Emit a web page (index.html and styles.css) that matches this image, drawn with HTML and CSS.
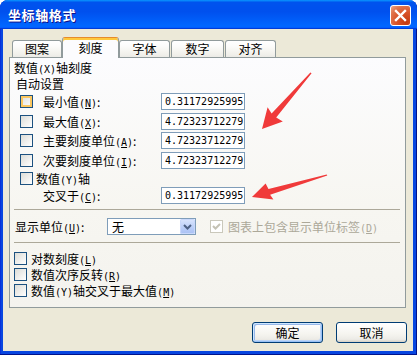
FILE: index.html
```html
<!DOCTYPE html>
<html lang="zh-CN">
<head>
	<meta charset="UTF-8">
	<title>坐标轴格式</title>
	<link rel="stylesheet" href="styles.css">
</head>
<body>
	<div class="win">
		<div class="titlebar">
			<span class="title">坐标轴格式</span>
			<a class="close" href="javascript:;">
				<svg width="19" height="19" viewBox="0 0 19 19"><path d="M5 5L14 14M14 5L5 14" stroke="#fff" stroke-width="2.4" stroke-linecap="square"/></svg>
			</a>
		</div>
		<div class="body">
			<ul class="tabs">
				<li class="t1">图案</li>
				<li class="t2 on">刻度</li>
				<li class="t3">字体</li>
				<li class="t4">数字</li>
				<li class="t5">对齐</li>
			</ul>
			<div class="panel">
				<p class="head">数值<span class="k">(X)</span>轴刻度</p>
				<p class="sub">自动设置</p>
				<div class="row h20"><i class="cb hot"></i><label>最小值<span class="k">(<u>N</u>)</span>:</label><div class="box">0.31172925995</div></div>
				<div class="row h20"><i class="cb"></i><label>最大值<span class="k">(<u>X</u>)</span>:</label><div class="box">4.72323712279</div></div>
				<div class="row h19"><i class="cb"></i><label>主要刻度单位<span class="k">(<u>A</u>)</span>:</label><div class="box">4.72323712279</div></div>
				<div class="row h20"><i class="cb"></i><label>次要刻度单位<span class="k">(<u>I</u>)</span>:</label><div class="box">4.72323712279</div></div>
				<div class="row h16"><i class="cb"></i><label class="short">数值<span class="k">(Y)</span>轴</label></div>
				<div class="row h19 indent"><label>交叉于<span class="k">(<u>C</u>)</span>:</label><div class="box">0.31172925995</div></div>
				<div class="line"></div>
				<div class="unit">
					<label>显示单位<span class="k">(<u>U</u>)</span>:</label>
					<div class="select">
						<span>无</span>
						<b class="drop"><svg width="15" height="15" viewBox="0 0 15 15"><path d="M4 6L7.5 9.5L11 6" fill="none" stroke="#4d6185" stroke-width="2"/></svg></b>
					</div>
					<i class="cb off"><svg width="11" height="11" viewBox="0 0 11 11"><path d="M2 5L4.5 7.5L9 3" fill="none" stroke="#c4c2b4" stroke-width="2"/></svg></i>
					<span class="gray">图表上包含显示单位标签<span class="k">(<u>D</u>)</span></span>
				</div>
				<div class="line"></div>
				<div class="opts">
					<div class="opt"><i class="cb"></i><label>对数刻度<span class="k">(<u>L</u>)</span></label></div>
					<div class="opt"><i class="cb"></i><label>数值次序反转<span class="k">(<u>R</u>)</span></label></div>
					<div class="opt"><i class="cb"></i><label>数值<span class="k">(Y)</span>轴交叉于最大值<span class="k">(<u>M</u>)</span></label></div>
				</div>
			</div>
			<div class="actions">
				<a class="btn def" href="javascript:;">确定</a>
				<a class="btn" href="javascript:;">取消</a>
			</div>
		</div>
		<!-- 红色箭头标注 -->
		<svg class="marks" width="417" height="355" viewBox="0 0 417 355">
			<polygon points="311.6,73.3 276.2,117.4 282.8,121.6 262,129 267.6,107.2 271.6,113.4 310.4,72.6" fill="#f03a3a"/>
			<polygon points="327.3,175.6 270.1,194.8 273.4,199.6 252,197 265.6,183.4 268.5,189 326.7,174.4" fill="#f03a3a"/>
		</svg>
	</div>
</body>
</html>
```

FILE: styles.css
```css
*{margin: 0;padding: 0;box-sizing: border-box;}
ul{list-style: none;}
html,body{background: #fff;}
body{font-family: "Noto Sans CJK SC", sans-serif;font-size: 12px;color: #000;}
a{text-decoration: none;color: #000;}
.win{position: relative;width: 417px;height: 355px;background: #0846e0;border-radius: 8px 8px 0 0;overflow: hidden;box-shadow: inset -1px -1px #00138c, inset 1px 0 #0831d9;}
.titlebar{height: 29px;display: flex;justify-content: space-between;align-items: flex-start;padding: 0 6px 0 8px;background: linear-gradient(180deg,#0997ff,#0053ee 8%,#0050ee 40%,#06f 88%,#06f 93%,#005bff 95%,#003dd7 96%,#003dd7);}
.title{color: #fff;font-weight: bold;font-size: 13px;letter-spacing: 0.6px;line-height: 30px;text-shadow: 1px 1px #0f1089;}
.close{display: block;width: 21px;height: 21px;margin-top: 5px;border: 1px solid #fff;border-radius: 3px;background: radial-gradient(circle at 80% 85%, #c33a10 0%, #d9542a 45%, #e0764e 75%, #f0a88a 100%);}
.close svg{display: block;margin: 0;}
.body{margin: 0 4px 4px 3px;height: 322px;background: #ece9d8;padding: 8px 7px 0 6px;}
.tabs{display: flex;align-items: flex-end;height: 21px;margin-bottom: -1px;padding-left: 3px;position: relative;z-index: 2;}
.tabs li{height: 17px;margin-bottom: 1px;border: 1px solid #919b9c;border-bottom: none;border-radius: 3px 3px 0 0;background: linear-gradient(#fff,#fcfcfb 30%,#f4f3ee 70%,#ecebe6);text-align: center;line-height: 16px;}
.tabs .t1{width: 50px;}
.tabs .t2{width: 57px;}
.tabs .t3{width: 51px;}
.tabs .t4{width: 53px;margin-left: 1px;}
.tabs .t5{width: 51px;margin-left: 1px;}
.tabs .on{height: 21px;margin-bottom: 0;background: #fcfcfe;border-top: 1px solid #e68b2c;box-shadow: inset 0 2px #ffc83c;line-height: 20px;padding-bottom: 1px;}
.panel{height: 251px;border: 1px solid #919b9c;background: linear-gradient(#fcfcfe,#f7f6f1 60%,#f4f3ee);}
.k{font-family: "DejaVu Sans Mono", monospace;font-size: 10px;}
.head{height: 19px;line-height: 19px;padding-left: 4px;}
.sub{height: 14px;line-height: 14px;padding-left: 6px;}
.row{display: flex;align-items: center;padding-left: 10px;}
.h20{height: 20px;}
.h19{height: 19px;}
.h16{height: 16px;}
.row label{width: 118px;margin-left: 10px;}
.row .short{margin-left: 3px;}
.row.indent{padding-left: 33px;}
.row.indent label{margin-left: 0;}
.box{width: 84px;height: 17px;border: 1px solid #7f9db9;background: #fff;padding-left: 3px;font-family: "DejaVu Sans Mono", monospace;font-size: 10px;line-height: 15px;white-space: nowrap;overflow: hidden;}
.cb{display: block;flex: none;width: 13px;height: 13px;border: 1px solid #1c5180;background: linear-gradient(135deg,#dcdcd7,#fff);}
.cb.hot{box-shadow: inset 0 0 0 2px #fbc761;}
.cb.off{border-color: #cac8bb;background: #fff;}
.cb.off svg{display: block;}
.line{height: 1px;margin: 4px 5px 0 4px;background: #aca899;}
.unit{display: flex;align-items: center;height: 32px;padding-left: 5px;}
.unit label{width: 92px;}
.select{display: flex;justify-content: space-between;align-items: center;width: 89px;height: 17px;border: 1px solid #7f9db9;background: #fff;padding: 0 0 0 4px;}
.drop{display: block;width: 15px;height: 15px;border-radius: 2px;background: linear-gradient(#dbe6fd,#b9cdf8 60%,#a9c0f3);box-shadow: inset 0 0 0 1px #c9d8fb;}
.drop svg{display: block;}
.unit .cb{margin-left: 14px;}
.gray{color: #aca899;margin-left: 5px;}
.unit + .line{margin-top: 0;}
.opts{padding: 7px 0 0 4px;}
.opt{display: flex;align-items: center;height: 16px;}
.opt label{margin-left: 4px;}
.actions{display: flex;justify-content: flex-end;gap: 13px;margin: 14px -1px 0 0;}
.btn{display: block;width: 71px;height: 21px;border: 1px solid #003c74;border-radius: 3px;background: linear-gradient(#fff,#f5f4ef 60%,#ecebe6 86%,#d6d0c5);text-align: center;line-height: 19px;}
.btn.def{box-shadow: inset -1px -1px #99c1f5, inset 1px 1px #cee7ff, inset -2px -2px #bcd4f6, inset 2px 2px #98b8ea;}
.marks{position: absolute;left: 0;top: 0;pointer-events: none;}
```
